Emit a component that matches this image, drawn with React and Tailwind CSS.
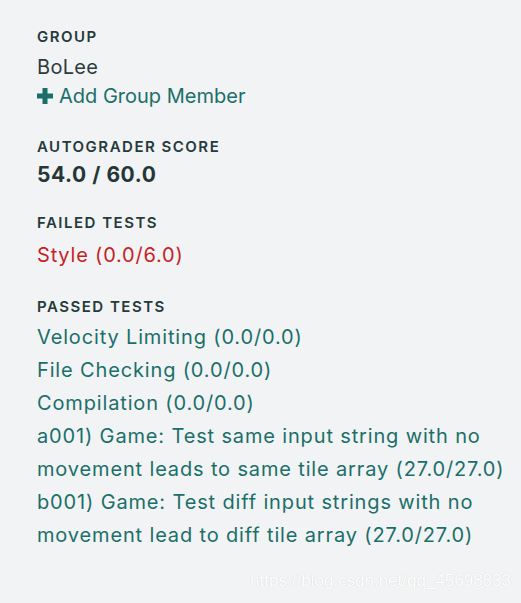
export default function App() {
  const passed = [
    'Velocity Limiting (0.0/0.0)',
    'File Checking (0.0/0.0)',
    'Compilation (0.0/0.0)',
    'a001) Game: Test same input string with no movement leads to same tile array (27.0/27.0)',
    'b001) Game: Test diff input strings with no movement lead to diff tile array (27.0/27.0)',
  ]
  return (
    <div className="relative w-[521px] h-[603px] bg-[#f2f3f5] pl-[37px] pr-[9px] pt-[27px] font-['Inter',sans-serif] overflow-hidden">
      <h3 className="text-[15px] leading-[20px] font-semibold uppercase tracking-[1.5px] text-[#253a3a]">Group</h3>
      <div className="mt-[6px] text-[20px] leading-[28px] tracking-[0.3px] text-[#2e3b3b]">BoLee</div>
      <a className="mt-[1px] flex items-center text-[20px] leading-[28px] text-[#1b6f69]">
        <svg width="16" height="16" viewBox="0 0 16 16" className="mr-[6px]">
          <path d="M5.5 0h5v5.5H16v5h-5.5V16h-5v-5.5H0v-5h5.5z" fill="#1b6f69" />
        </svg>
        Add Group Member
      </a>

      <h3 className="mt-[27px] text-[15px] leading-[20px] font-semibold uppercase tracking-[1.5px] text-[#253a3a]">Autograder Score</h3>
      <div className="mt-[4px] text-[21px] leading-[28px] font-bold tracking-[0.55px] text-[#243636]">54.0 / 60.0</div>

      <h3 className="mt-[24px] text-[15px] leading-[20px] font-semibold uppercase tracking-[1.5px] text-[#253a3a]">Failed Tests</h3>
      <div className="mt-[8px] text-[20px] leading-[28px] tracking-[0.8px] text-[#c41f26]">Style (0.0/6.0)</div>

      <h3 className="mt-[28px] text-[15px] leading-[20px] font-semibold uppercase tracking-[1.5px] text-[#253a3a]">Passed Tests</h3>
      <ul className="mt-[4px]">
        {passed.map(t => (
          <li key={t} className="text-[20px] leading-[33px] tracking-[0.85px] text-[#1b6f69]">{t}</li>
        ))}
      </ul>

      <div className="absolute right-[10px] bottom-[10px] text-[17px] text-white font-['Liberation_Sans',sans-serif] [text-shadow:0_0_1px_#c8c8c8]">
        https://blog.csdn.net/qq_45698833
      </div>
    </div>
  )
}
